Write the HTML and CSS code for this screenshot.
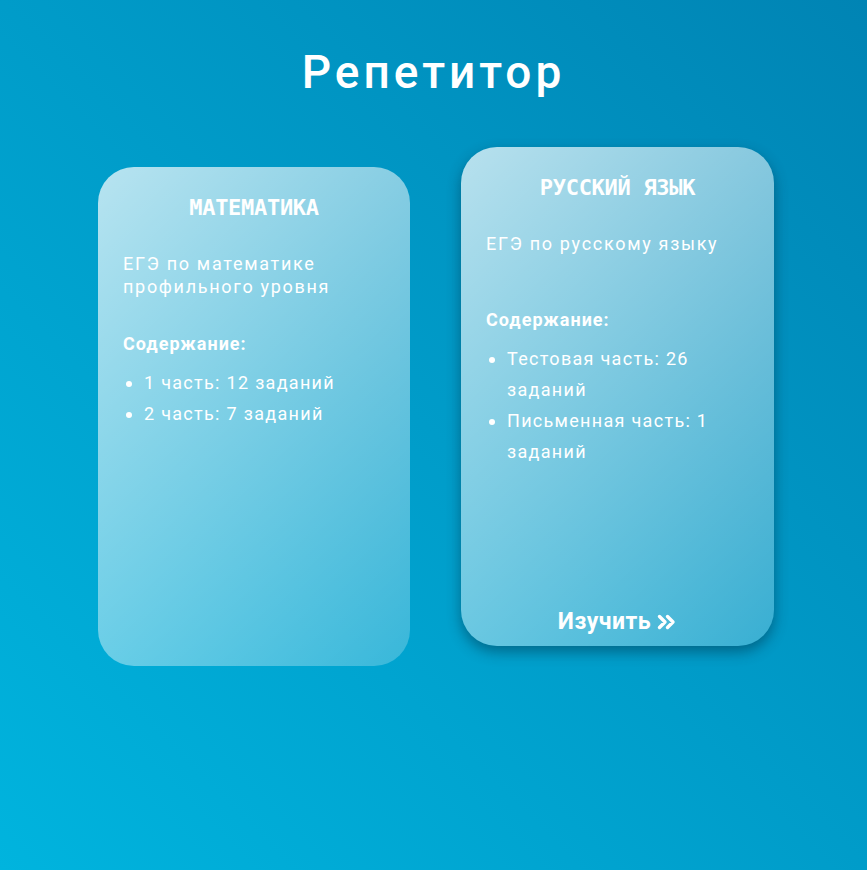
FILE: index.html
```html
<!DOCTYPE html>
<html lang="ru">
<head>
<meta charset="utf-8">
<title>Репетитор</title>
<link rel="stylesheet" href="styles.css">
</head>
<body>
<main class="page">
  <h1 class="page-title">Репетитор</h1>
  <section class="cards">
    <article class="card">
      <h2 class="card-title">МАТЕМАТИКА</h2>
      <p class="card-desc">ЕГЭ по математике профильного уровня</p>
      <h3 class="card-sub">Содержание:</h3>
      <ul class="card-list">
        <li>1 часть: 12 заданий</li>
        <li>2 часть: 7 заданий</li>
      </ul>
    </article>
    <article class="card card--active">
      <h2 class="card-title">РУССКИЙ ЯЗЫК</h2>
      <p class="card-desc">ЕГЭ по русскому языку</p>
      <h3 class="card-sub">Содержание:</h3>
      <ul class="card-list">
        <li>Тестовая часть: 26 заданий</li>
        <li>Письменная часть: 1 заданий</li>
      </ul>
      <a class="card-btn" href="#">Изучить <svg class="card-btn-icon" viewBox="0 0 20 16" width="20" height="16" aria-hidden="true"><path d="M2.5 2.5 L8 8 L2.5 13.5 M10.5 2.5 L16 8 L10.5 13.5" fill="none" stroke="#fff" stroke-width="3.4" stroke-linecap="round" stroke-linejoin="round"/></svg></a>
    </article>
  </section>
</main>
</body>
</html>
```

FILE: styles.css
```css
* { box-sizing: border-box; }

html, body {
  margin: 0;
  height: 100%;
}

body {
  background: linear-gradient(45deg, #00b4de 0%, #0084b4 100%);
  font-family: Roboto, "Noto Sans", sans-serif;
  color: #fff;
}

.page {
  padding-top: 40px;
}

.page-title {
  margin: 0;
  text-align: center;
  font-size: 46px;
  line-height: 64px;
  font-weight: 500;
  letter-spacing: 4px;
}

.cards {
  display: flex;
  justify-content: center;
  align-items: flex-start;
  gap: 51px;
  margin-top: 63px;
  padding-left: 5px;
}

.card {
  width: 312px;
  height: 499px;
  border-radius: 36px;
  background: linear-gradient(135deg, rgba(255,255,255,0.72) 0%, rgba(255,255,255,0.22) 100%);
  padding: 28px 25px 11px;
  display: flex;
  flex-direction: column;
}

.card--active {
  width: 313px;
  transform: translateY(-20px);
  box-shadow: 0 6px 14px rgba(0, 40, 60, 0.45);
}

.card-title {
  margin: 0;
  text-align: center;
  font-family: "DejaVu Sans Mono", monospace;
  font-weight: 700;
  font-size: 22px;
  line-height: 26px;
  letter-spacing: -0.3px;
}

.card-desc {
  margin: 30.5px 0 34.5px;
  min-height: 42px;
  font-size: 18px;
  line-height: 23px;
  letter-spacing: 1.7px;
  font-weight: 400;
}

.card-sub {
  margin: 0;
  font-size: 18px;
  line-height: 24px;
  font-weight: 700;
  letter-spacing: 1px;
}

.card-list {
  margin: 10.5px 0 0;
  padding-left: 21px;
  font-size: 18px;
  line-height: 31px;
  letter-spacing: 1.3px;
}

.card-btn {
  margin-top: auto;
  align-self: center;
  display: flex;
  align-items: center;
  gap: 6px;
  color: #fff;
  text-decoration: none;
  font-size: 23px;
  line-height: 26px;
  font-weight: 700;
  letter-spacing: 0.5px;
}

.card-btn-icon {
  display: block;
}
```
